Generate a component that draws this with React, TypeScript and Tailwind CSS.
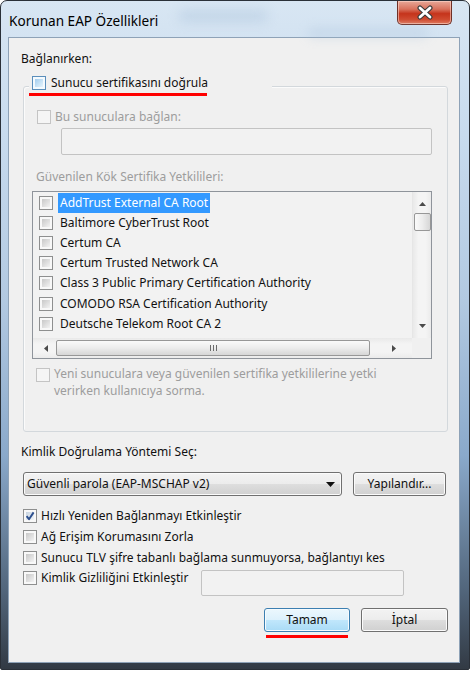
import React from "react";

type BoxKind = "normal" | "hot" | "disabled" | "checked";

function CheckBox({ kind = "normal" }: { kind?: BoxKind }) {
  if (kind === "disabled") {
    return <span className="block h-[14px] w-[14px] shrink-0 border border-[#c4c4c4] bg-[#f5f5f5]" />;
  }
  const hot = kind === "hot";
  return (
    <span
      className={
        hot
          ? "relative flex h-[14px] w-[14px] shrink-0 border border-[#5a8ebb] bg-[#f4fafe] p-[2px]"
          : "relative flex h-[14px] w-[14px] shrink-0 border border-[#8e8f8f] bg-[#f8f8f8] p-[2px]"
      }
    >
      <span
        className={
          hot
            ? "block h-full w-full bg-linear-to-br from-[#a3cdee] to-[#e6f4fc]"
            : kind === "checked"
              ? "block h-full w-full bg-linear-to-br from-[#c7d3e0] to-[#f2f5f8]"
              : "block h-full w-full bg-linear-to-br from-[#c8c8c8] to-[#f3f3f3]"
        }
      />
      {kind === "checked" && (
        <svg className="absolute left-0 top-0" width="12" height="12" viewBox="0 0 12 12">
          <path d="M2.6 6.2 L5 9.2 L9.6 2.4" fill="none" stroke="#2c4f8e" strokeWidth="1.9" strokeLinejoin="round" />
        </svg>
      )}
    </span>
  );
}

function Triangle({ dir, color = "#4a4a4a" }: { dir: "up" | "down" | "left" | "right"; color?: string }) {
  const pts =
    dir === "up"
      ? "0,4 7,4 3.5,0"
      : dir === "down"
        ? "0,0 7,0 3.5,4"
        : dir === "left"
          ? "4,0 4,7 0,3.5"
          : "0,0 0,7 4,3.5";
  const vertical = dir === "up" || dir === "down";
  return (
    <svg width={vertical ? 7 : 4} height={vertical ? 4 : 7} viewBox={vertical ? "0 0 7 4" : "0 0 4 7"}>
      <polygon points={pts} fill={color} />
    </svg>
  );
}

const btnFace =
  "bg-[linear-gradient(#f3f3f3,#ececec_50%,#dedede_50%,#d0d0d0)] border border-[#707070] shadow-[inset_0_0_0_1px_#fbfbfb]";

const certs = [
  "AddTrust External CA Root",
  "Baltimore CyberTrust Root",
  "Certum CA",
  "Certum Trusted Network CA",
  "Class 3 Public Primary Certification Authority",
  "COMODO RSA Certification Authority",
  "Deutsche Telekom Root CA 2",
];

function CertList() {
  return (
    <div className="mt-[5px] flex h-[168px] w-[400px] flex-col border border-[#8f949b] bg-[#f2f2f2]">
      <div className="flex h-[146px]">
        <div className="flex-1 pt-[1px]">
          {certs.map((c, i) => (
            <div key={c} className="flex h-[20.1px] items-center pl-[6px]">
              <CheckBox />
              <span
                className={
                  i === 0
                    ? "ml-[5px] bg-[#3399ff] px-[2px] leading-[20px] text-white"
                    : "ml-[5px] px-[2px] leading-[20px] text-[#111]"
                }
              >
                {c}
              </span>
            </div>
          ))}
        </div>
        {/* vertical scroll bar */}
        <div className="flex w-[19px] flex-col items-center border-l border-[#e6e6e6] bg-[linear-gradient(90deg,#e9e9e9,#f4f4f4_30%,#f4f4f4_70%,#ebebeb)]">
          <div className="flex h-[21px] items-center justify-center pt-[2px]">
            <Triangle dir="up" />
          </div>
          <div className="h-[18px] w-[17px] rounded-[2px] border border-[#979797] bg-[linear-gradient(90deg,#fafafa,#ececec_50%,#d6d6d6)]" />
          <div className="flex-1" />
          <div className="flex h-[22px] items-center justify-center pb-[3px]">
            <Triangle dir="down" />
          </div>
        </div>
      </div>
      {/* horizontal scroll bar */}
      <div className="flex h-[20px]">
        <div className="flex flex-1 items-center bg-[linear-gradient(#e9e9e9,#f4f4f4_30%,#f4f4f4_70%,#ebebeb)]">
          <div className="flex w-[23px] justify-center pl-[2px]">
            <Triangle dir="left" />
          </div>
          <div className="flex h-[16px] w-[314px] items-center justify-center rounded-[2px] border border-[#979797] bg-[linear-gradient(#fafafa,#ececec_50%,#d6d6d6)]">
            <div className="flex gap-[2px]">
              <span className="h-[6px] w-[1px] bg-[#6b6b6b]" />
              <span className="h-[6px] w-[1px] bg-[#6b6b6b]" />
              <span className="h-[6px] w-[1px] bg-[#6b6b6b]" />
            </div>
          </div>
          <div className="flex flex-1 justify-center pl-[6px]">
            <Triangle dir="right" />
          </div>
        </div>
        <div className="w-[19px] bg-[#f0f0f0]" />
      </div>
    </div>
  );
}

function CloseButton() {
  return (
    <div className="mr-[8px] flex h-[24px] w-[55px] items-center justify-center rounded-b-[5px] border border-t-0 border-[#6e3027] bg-[linear-gradient(#e8a898,#d9735e_35%,#c5341c_55%,#cf4a2f_80%,#e07a5f)] shadow-[inset_0_0_0_1px_rgba(255,220,210,0.55)]">
      <svg width="18" height="15" viewBox="0 0 18 15">
        <path d="M4 3 L14 12 M14 3 L4 12" stroke="#3a3a3a" strokeWidth="5" strokeLinecap="round" fill="none" />
        <path d="M4 3 L14 12 M14 3 L4 12" stroke="#ffffff" strokeWidth="2.8" strokeLinecap="round" fill="none" />
      </svg>
    </div>
  );
}

export default function App() {
  return (
    <div className="h-[674px] w-[470px] bg-white font-['Noto_Sans','DejaVu_Sans',sans-serif] text-[12px]">
      <div className="flex h-[670px] w-[470px] flex-col overflow-hidden rounded-t-[7px] rounded-b-[2px] border border-[#2a3038] bg-[linear-gradient(180deg,#d8e6f3_0%,#c8dbee_20%,#b2c9e1_45%,#8aa9cb_68%,#52667c_88%,#323a44_100%)] pb-[6px] pl-[7px] pr-[9px]">
        {/* title bar */}
        <div className="relative flex h-[36px] items-start justify-between">
          <div className="pointer-events-none absolute left-[170px] top-[9px] h-[12px] w-[90px] rounded-full bg-[#a6bfd9] opacity-40 blur-[6px]" />
          <div className="pointer-events-none absolute left-[300px] top-[28px] h-[8px] w-[120px] rounded-full bg-[#a5bed8] opacity-40 blur-[6px]" />
          <span className="relative pl-[1px] pt-[10px] text-[13.6px] leading-[20px] text-black">Korunan EAP Özellikleri</span>
          <CloseButton />
        </div>

        {/* client area */}
        <div className="flex flex-1 flex-col border border-[#8ea2b7] bg-[#f0f0f0] pl-[14px] pr-[11px] leading-[18px] text-[#111]">
          <div className="-ml-[2px] mt-[12px] h-[18px]">Bağlanırken:</div>

          {/* group box */}
          <div className="relative mt-[18px] h-[346px] rounded-[3px] border border-[#d3d8dc] pl-[8px] pr-[14px] shadow-[inset_1px_1px_0_#fbfbfb]">
            <div className="absolute -top-[13px] left-[5px] flex h-[18px] w-[243px] items-center bg-[#f0f0f0] px-[3px]">
              <CheckBox kind="hot" />
              <span className="ml-[5px]">Sunucu sertifikasını doğrula</span>
            </div>
            <div className="absolute left-[5px] top-[6px] h-[3px] w-[178px] bg-[#ff0000]" />

            <div className="ml-[5px] mt-[21px] flex h-[18px] items-center text-[#9d9d9d]">
              <CheckBox kind="disabled" />
              <span className="ml-[4px]">Bu sunuculara bağlan:</span>
            </div>
            <div className="ml-[29px] mt-[2px] h-[27px] w-[371px] rounded-[2px] border border-[#c3c3c3] bg-[#f2f2f2]" />

            <div className="ml-[4px] mt-[13px] h-[18px] text-[#9d9d9d]">Güvenilen Kök Sertifika Yetkilileri:</div>

            <CertList />

            <div className="ml-[4px] mt-[9px] flex items-start text-[#9d9d9d]">
              <CheckBox kind="disabled" />
              <span className="ml-[4px] -mt-[2px] leading-[16.5px]">
                Yeni sunuculara veya güvenilen sertifika yetkililerine yetki
                <br />
                verirken kullanıcıya sorma.
              </span>
            </div>
          </div>

          <div className="-ml-[2px] mt-[11px] h-[18px]">Kimlik Doğrulama Yöntemi Seç:</div>

          <div className="mt-[11px] flex h-[24px] gap-[11px]">
            <div className={`flex w-[319px] items-center justify-between rounded-[3px] pl-[3px] pr-[6px] ${btnFace}`}>
              <span>Güvenli parola (EAP-MSCHAP v2)</span>
              <svg width="9" height="5" viewBox="0 0 9 5">
                <polygon points="0,0 9,0 4.5,5" fill="#111" />
              </svg>
            </div>
            <div className={`flex w-[93px] items-center justify-center rounded-[3px] ${btnFace}`}>Yapılandır...</div>
          </div>

          <div className="mt-[10px] flex h-[20.7px] items-center">
            <CheckBox kind="checked" />
            <span className="ml-[4px]">Hızlı Yeniden Bağlanmayı Etkinleştir</span>
          </div>
          <div className="flex h-[20.7px] items-center">
            <CheckBox />
            <span className="ml-[4px]">Ağ Erişim Korumasını Zorla</span>
          </div>
          <div className="flex h-[20.7px] items-center">
            <CheckBox />
            <span className="ml-[4px]">Sunucu TLV şifre tabanlı bağlama sunmuyorsa, bağlantıyı kes</span>
          </div>
          <div className="flex items-start">
            <div className="flex h-[20.7px] w-[178px] items-center">
              <CheckBox />
              <span className="ml-[4px]">Kimlik Gizliliğini Etkinleştir</span>
            </div>
            <div className="mt-[2px] h-[26px] w-[203px] rounded-[2px] border border-[#c3c3c3] bg-[#f2f2f2]" />
          </div>

          <div className="mt-[12px] flex justify-end gap-[11px]">
            <div className="relative">
              <div className="flex h-[24px] w-[86px] items-center justify-center rounded-[3px] border border-[#3c7fb1] bg-[linear-gradient(#ecf7fd,#dcf1fc_50%,#c1e7fc_50%,#a9dbf6)] shadow-[inset_0_0_0_1px_#f6fbfe]">
                Tamam
              </div>
              <div className="absolute left-[2px] top-[27px] h-[3px] w-[82px] bg-[#ff0000]" />
            </div>
            <div className={`flex h-[24px] w-[87px] items-center justify-center rounded-[3px] ${btnFace}`}>İptal</div>
          </div>
        </div>
      </div>
    </div>
  );
}
